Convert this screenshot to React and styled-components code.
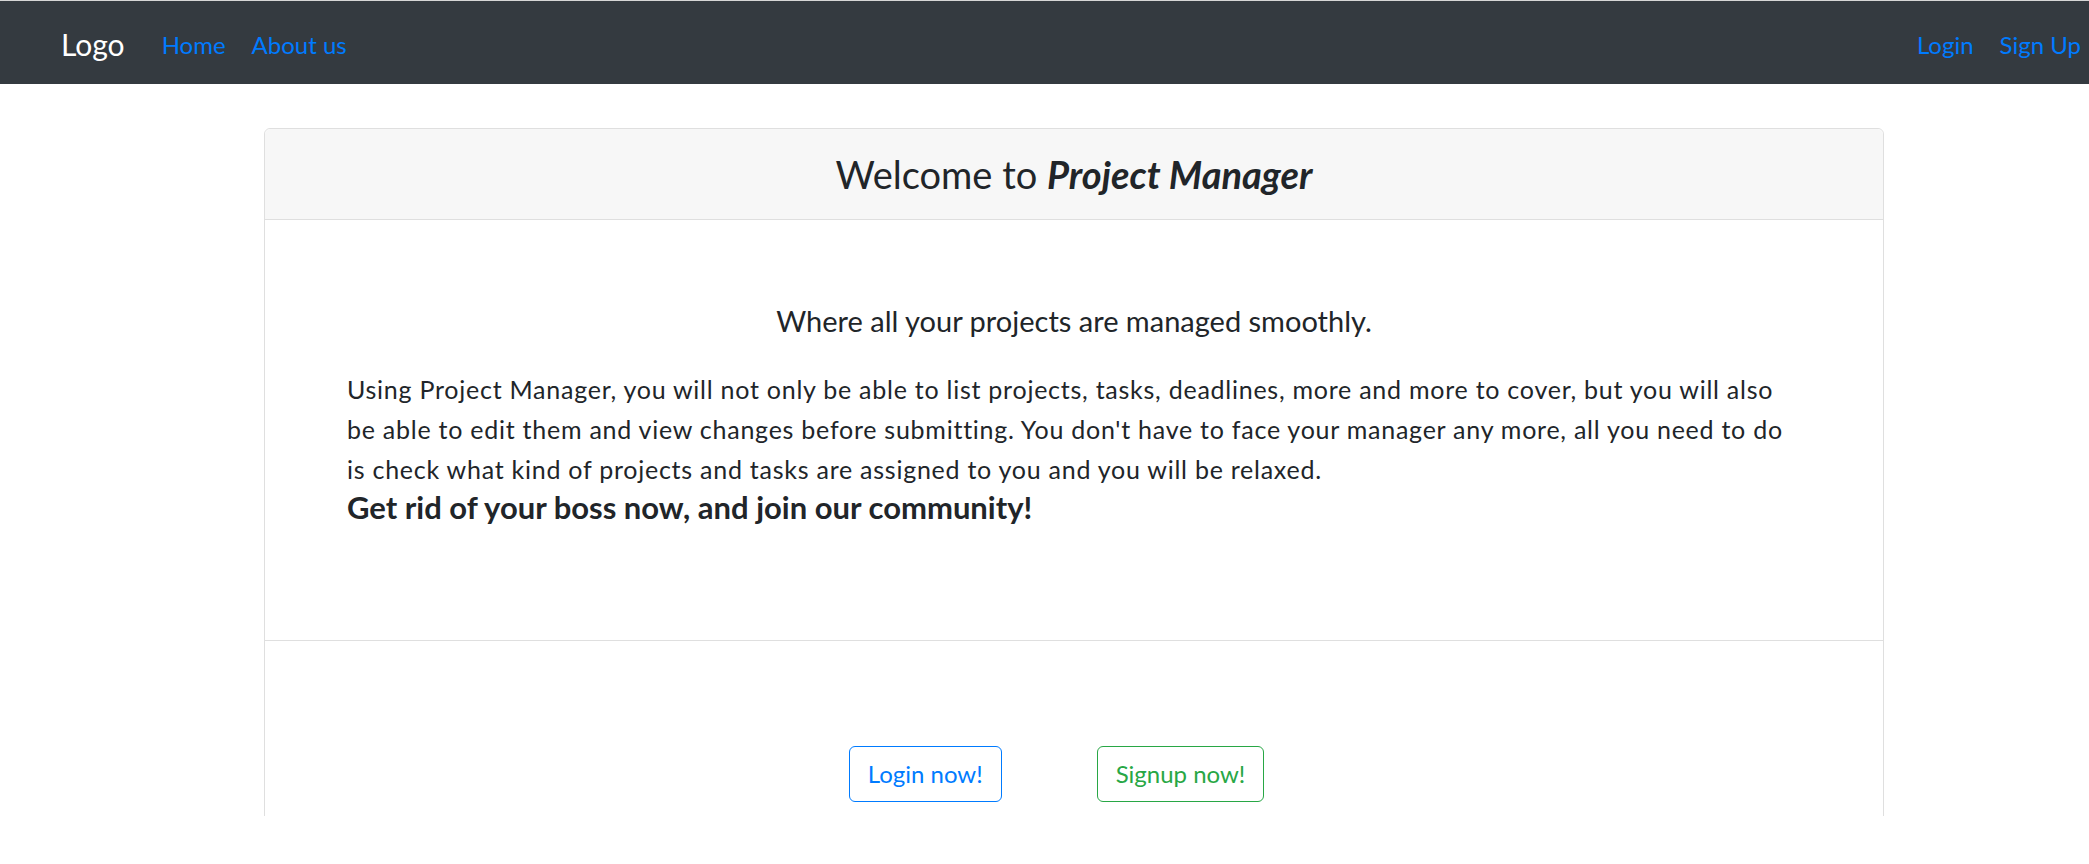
import styled, { createGlobalStyle } from 'styled-components';

const Colors = {
  dark: '#343a40',
  text: '#212529',
  blue: '#007bff',
  green: '#28a745',
  border: '#dfdfdf',
  headerBg: '#f7f7f7',
};

const GlobalStyle = createGlobalStyle`
  * {
    box-sizing: border-box;
  }
  body {
    margin: 0;
    background: #fff;
    color: ${Colors.text};
    font-family: Lato, "Open Sans", "Liberation Sans", sans-serif;
  }
`;

const Page = styled.div`
  height: 864px;
  overflow: hidden;
`;

const Navbar = styled.nav`
  display: flex;
  align-items: center;
  height: 84px;
  padding: 3px 8px 0 61px;
  background-color: ${Colors.dark};
  border-top: 1px solid #d6d6d6;
`;

const Brand = styled.a`
  margin-right: 25px;
  font-size: 30px;
  color: #fff;
  text-decoration: none;
`;

const NavGroup = styled.div`
  display: flex;
  align-items: center;
  gap: 2px;
  margin-left: ${(p) => (p.$right ? 'auto' : '0')};
`;

const NavLink = styled.a`
  padding: 12px ${(p) => (p.$last ? '0' : '12px')} 12px 12px;
  font-size: 24px;
  color: ${Colors.blue};
  text-decoration: none;
  cursor: pointer;
`;

const Main = styled.main`
  height: 732px;
  overflow: hidden;
  padding-top: 44px;
  padding-left: 264px;
`;

const Card = styled.div`
  width: 1620px;
  border: 1px solid ${Colors.border};
  border-radius: 6px;
  background: #fff;
`;

const CardHeader = styled.div`
  padding: 24px 30px 18px;
  background-color: ${Colors.headerBg};
  border-bottom: 1px solid ${Colors.border};
  border-radius: 6px 6px 0 0;
  text-align: center;
`;

const Title = styled.h4`
  margin: 0 0 5px;
  font-size: 38px;
  font-weight: 400;
  line-height: 43px;
`;

const CardBody = styled.div`
  padding: 83px 82px 115px;
  border-bottom: 1px solid ${Colors.border};
`;

const Tagline = styled.h5`
  margin: 0 0 30px;
  font-size: 29px;
  font-weight: 400;
  line-height: 36px;
  text-align: center;
`;

const Intro = styled.p`
  margin: 0;
  font-size: 25px;
  letter-spacing: 0.75px;
  line-height: 40px;
`;

const CallOut = styled.h5`
  margin: 0;
  font-size: 31px;
  font-weight: 700;
  line-height: 36px;
`;

const CardActions = styled.div`
  display: flex;
  justify-content: center;
  gap: 95px;
  padding: 105px 35px 120px 0;
`;

const OutlineButton = styled.button`
  padding: 9px 18px;
  font-family: inherit;
  font-size: 24px;
  line-height: 36px;
  color: ${(p) => p.$color};
  background: transparent;
  border: 1px solid ${(p) => p.$color};
  border-radius: 6px;
  cursor: pointer;
`;

function App() {
  return (
    <Page>
      <GlobalStyle />
      <Navbar>
        <Brand>Logo</Brand>
        <NavGroup>
          <NavLink>Home</NavLink>
          <NavLink>About us</NavLink>
        </NavGroup>
        <NavGroup $right>
          <NavLink>Login</NavLink>
          <NavLink $last>Sign Up</NavLink>
        </NavGroup>
      </Navbar>
      <Main>
        <Card>
          <CardHeader>
            <Title>
              Welcome to{' '}
              <i>
                <b>Project Manager</b>
              </i>
            </Title>
          </CardHeader>
          <CardBody>
            <Tagline>Where all your projects are managed smoothly.</Tagline>
            <Intro>
              Using Project Manager, you will not only be able to list projects, tasks, deadlines,
              more and more to cover, but you will also
              <br />
              be able to edit them and view changes before submitting. You don't have to face your
              manager any more, all you need to do
              <br />
              is check what kind of projects and tasks are assigned to you and you will be relaxed.
            </Intro>
            <CallOut>Get rid of your boss now, and join our community!</CallOut>
          </CardBody>
          <CardActions>
            <OutlineButton $color={Colors.blue}>Login now!</OutlineButton>
            <OutlineButton $color={Colors.green}>Signup now!</OutlineButton>
          </CardActions>
        </Card>
      </Main>
    </Page>
  );
}

export default App;
